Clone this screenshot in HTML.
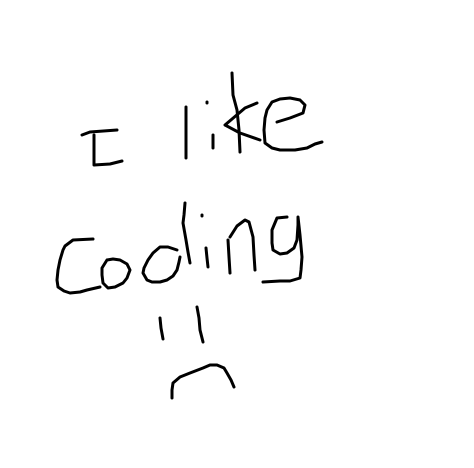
<!DOCTYPE html>
<html><head><style>html,body{margin:0;padding:0;background:#fff;}svg{display:block}</style></head>
<body>
<svg width="474" height="468" viewBox="0 0 474 468" xmlns="http://www.w3.org/2000/svg">
<g fill="none" stroke="#000" stroke-width="3" stroke-linecap="round" stroke-linejoin="round">
<path d="M82,135 L90,132 L117,130"/>
<path d="M94,135 L94,165 L110,164 L122,161"/>
<path d="M186,107 L186,158"/>
<path d="M207,102 L207,103"/>
<path d="M213,135 L213,148"/>
<path d="M232,73 L233,95 L237,110 L239,130 L240,152"/>
<path d="M257,103 L245,108 L225,125 L240,133 L260,140"/>
<path d="M277,122 L290,118 L303,113 L305,105 L300,100 L290,98 L280,99 L272,102 L267,110 L265,118 L264,130 L265,143 L272,148 L280,150 L295,150 L307,148 L315,144 L322,142"/>
<path d="M93,239 L73,240 L65,246 L63,250 L60,260 L58,270 L57,280 L58,287 L64,291 L70,293 L80,292 L87,290 L100,287"/>
<path d="M107,260 L113,259 L120,260 L127,264 L130,270 L127,278 L123,283 L115,287 L108,288 L103,283 L102,275 L102,268 L107,260"/>
<path d="M177,250 L168,247 L160,247 L153,253 L148,260 L144,268 L143,273 L147,280 L152,282 L160,282 L167,280 L173,276 L177,270 L179,262 L180,257"/>
<path d="M185,203 L184,215 L183,223 L186,240 L188,252 L190,263"/>
<path d="M202,215 L202,216"/>
<path d="M206,248 L207,258 L208,267"/>
<path d="M228,240 L229,257 L230,273"/>
<path d="M230,237 L237,226 L245,220 L249,222 L253,237 L254,255 L255,270"/>
<path d="M287,217 L277,218 L272,230 L272,243 L273,250 L280,254 L287,253 L294,248 L297,240 L298,225 L298,217 L300,235 L302,257 L301,270 L300,278 L290,281 L280,281 L263,282"/>
<path d="M160,318 L161,328 L163,339"/>
<path d="M197,307 L199,318 L200,330 L203,342"/>
<path d="M172,398 L172,390 L173,383 L180,377 L190,373 L203,368 L210,365 L217,365 L224,368 L227,373 L231,380 L234,387"/>
</g>
</svg>
</body></html>
